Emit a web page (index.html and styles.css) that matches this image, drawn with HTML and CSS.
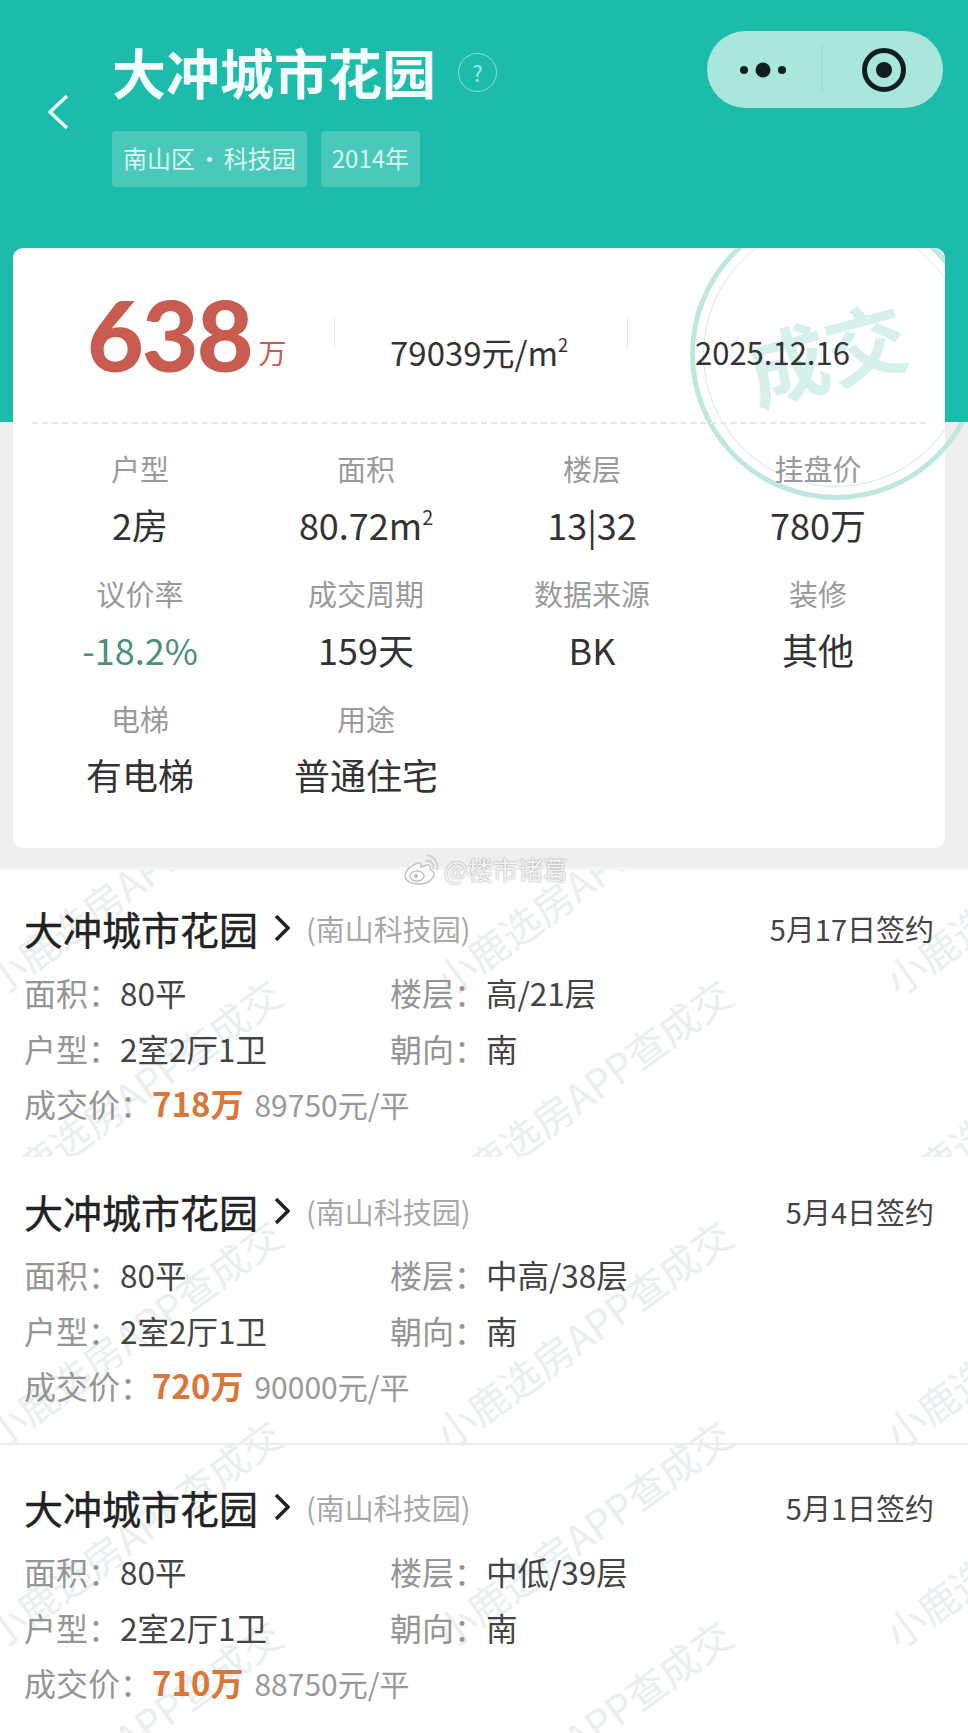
FILE: index.html
```html
<!DOCTYPE html>
<html lang="zh-CN">
<head>
<meta charset="utf-8">
<title>大冲城市花园</title>
<link rel="stylesheet" href="styles.css">
</head>
<body>
<div class="page">
  <section class="top">
    <header class="hero">
      <svg class="back" width="24" height="36" viewBox="0 0 24 36"><path d="M21 2 L4 18 L21 34"/></svg>
      <div class="hero-main">
        <div class="hero-title">
          <h1>大冲城市花园</h1>
          <span class="help">?</span>
        </div>
        <div class="tags">
          <span class="tag tag-area">南山区 · 科技园</span>
          <span class="tag">2014年</span>
        </div>
      </div>
      <svg class="capsule" width="236" height="77" viewBox="0 0 236 77">
        <rect width="236" height="77" rx="38.5" fill="#a9e6db"/>
        <line x1="115" y1="14" x2="115" y2="62" stroke="#98d8cd" stroke-width="1"/>
        <circle cx="37" cy="39" r="4" fill="#101e1e"/>
        <circle cx="56" cy="39" r="7.5" fill="#101e1e"/>
        <circle cx="75" cy="39" r="4" fill="#101e1e"/>
        <circle cx="177" cy="39" r="19.5" fill="none" stroke="#101e1e" stroke-width="5"/>
        <circle cx="177" cy="39" r="8" fill="#101e1e"/>
      </svg>
    </header>

    <div class="card">
      <div class="stamp">
        <div class="stamp-inner"></div>
        <span class="stamp-text">成交</span>
      </div>
      <div class="summary">
        <div class="price"><span class="price-num">638</span><span class="price-unit">万</span></div>
        <i class="vline"></i>
        <div class="rate">79039元/m<sup>2</sup></div>
        <i class="vline"></i>
        <div class="date">2025.12.16</div>
      </div>
      <div class="stats">
        <div class="stat"><div class="stat-label">户型</div><div class="stat-value">2房</div></div>
        <div class="stat"><div class="stat-label">面积</div><div class="stat-value">80.72m<sup>2</sup></div></div>
        <div class="stat"><div class="stat-label">楼层</div><div class="stat-value">13|32</div></div>
        <div class="stat"><div class="stat-label">挂盘价</div><div class="stat-value">780万</div></div>
        <div class="stat"><div class="stat-label">议价率</div><div class="stat-value is-down">-18.2%</div></div>
        <div class="stat"><div class="stat-label">成交周期</div><div class="stat-value">159天</div></div>
        <div class="stat"><div class="stat-label">数据来源</div><div class="stat-value">BK</div></div>
        <div class="stat"><div class="stat-label">装修</div><div class="stat-value">其他</div></div>
        <div class="stat"><div class="stat-label">电梯</div><div class="stat-value">有电梯</div></div>
        <div class="stat"><div class="stat-label">用途</div><div class="stat-value">普通住宅</div></div>
      </div>
    </div>
  </section>

  <section class="band band-one">
    <div class="wm wm-one">
      <div class="wm-cell"><span>小鹿选房APP查成交</span></div><div class="wm-cell"><span>小鹿选房APP查成交</span></div><div class="wm-cell"><span>小鹿选房APP查成交</span></div>
      <div class="wm-cell"><span>小鹿选房APP查成交</span></div><div class="wm-cell"><span>小鹿选房APP查成交</span></div><div class="wm-cell"><span>小鹿选房APP查成交</span></div>
    </div>
    <article class="item item-first">
      <div class="item-head">
        <span class="item-name">大冲城市花园</span>
        <svg class="chev" width="16" height="28" viewBox="0 0 16 28"><path d="M2 2 L14 14 L2 26"/></svg>
        <span class="item-area">(南山科技园)</span>
        <span class="item-date">5月17日签约</span>
      </div>
      <div class="row"><div class="cell"><span class="k">面积：</span><span class="v">80平</span></div><div class="cell"><span class="k">楼层：</span><span class="v">高/21层</span></div></div>
      <div class="row"><div class="cell"><span class="k">户型：</span><span class="v">2室2厅1卫</span></div><div class="cell"><span class="k">朝向：</span><span class="v">南</span></div></div>
      <div class="row row-price"><div class="cell"><span class="k">成交价：</span><span class="deal">718万</span><span class="unit">89750元/平</span></div></div>
    </article>
  </section>

  <section class="band band-two">
    <div class="wm wm-two">
      <div class="wm-cell"><span>小鹿选房APP查成交</span></div><div class="wm-cell"><span>小鹿选房APP查成交</span></div><div class="wm-cell"><span>小鹿选房APP查成交</span></div>
      <div class="wm-cell"><span>小鹿选房APP查成交</span></div><div class="wm-cell"><span>小鹿选房APP查成交</span></div><div class="wm-cell"><span>小鹿选房APP查成交</span></div>
      <div class="wm-cell"><span>小鹿选房APP查成交</span></div><div class="wm-cell"><span>小鹿选房APP查成交</span></div><div class="wm-cell"><span>小鹿选房APP查成交</span></div>
    </div>
    <article class="item item-second">
      <div class="item-head">
        <span class="item-name">大冲城市花园</span>
        <svg class="chev" width="16" height="28" viewBox="0 0 16 28"><path d="M2 2 L14 14 L2 26"/></svg>
        <span class="item-area">(南山科技园)</span>
        <span class="item-date">5月4日签约</span>
      </div>
      <div class="row"><div class="cell"><span class="k">面积：</span><span class="v">80平</span></div><div class="cell"><span class="k">楼层：</span><span class="v">中高/38层</span></div></div>
      <div class="row"><div class="cell"><span class="k">户型：</span><span class="v">2室2厅1卫</span></div><div class="cell"><span class="k">朝向：</span><span class="v">南</span></div></div>
      <div class="row row-price"><div class="cell"><span class="k">成交价：</span><span class="deal">720万</span><span class="unit">90000元/平</span></div></div>
    </article>
    <article class="item item-third">
      <div class="item-head">
        <span class="item-name">大冲城市花园</span>
        <svg class="chev" width="16" height="28" viewBox="0 0 16 28"><path d="M2 2 L14 14 L2 26"/></svg>
        <span class="item-area">(南山科技园)</span>
        <span class="item-date">5月1日签约</span>
      </div>
      <div class="row"><div class="cell"><span class="k">面积：</span><span class="v">80平</span></div><div class="cell"><span class="k">楼层：</span><span class="v">中低/39层</span></div></div>
      <div class="row"><div class="cell"><span class="k">户型：</span><span class="v">2室2厅1卫</span></div><div class="cell"><span class="k">朝向：</span><span class="v">南</span></div></div>
      <div class="row row-price"><div class="cell"><span class="k">成交价：</span><span class="deal">710万</span><span class="unit">88750元/平</span></div></div>
    </article>
  </section>

  <div class="weibo">
    <svg width="36" height="34" viewBox="0 0 36 34">
      <path class="wb-body" d="M15 11 C8 13 2 19 2 24 C2 29 9 32 16 32 C25 32 31 27 31 22 C31 19 28 18 27 17 C28 15 27 13 25 13 C23 13 20 15 18 15 C18 13 18 10 15 11Z"/>
      <ellipse class="wb-body" cx="14" cy="24" rx="7" ry="5"/>
      <circle class="wb-eye" cx="13" cy="24" r="2"/>
      <path class="wb-arc" d="M23 9 a6 6 0 0 1 7 8"/>
      <path class="wb-arc" d="M24 3 a12 12 0 0 1 10 15"/>
    </svg>
    <span>@楼市诸葛</span>
  </div>
</div>
</body>
</html>
```

FILE: styles.css
```css
* { box-sizing: border-box; }
html, body { margin: 0; padding: 0; background: #fff; }
body { font-family: "Noto Sans CJK SC", "Noto Sans", sans-serif; }
.page { position: relative; width: 968px; height: 1733px; overflow: hidden; }

/* top area */
.top {
  height: 870px;
  background: linear-gradient(#1dbcaa 422px, #efefef 422px);
  border-bottom: 3px solid #f6f6f6;
}
.hero { display: flex; align-items: flex-start; height: 248px; padding: 31px 25px 0 46px; }
.back { margin-top: 63px; flex: none; }
.back path { fill: none; stroke: #e8fbf8; stroke-width: 3.5; }
.hero-main { margin-left: 42px; margin-top: 11px; }
.hero-title { display: flex; align-items: center; height: 60px; }
.hero-title h1 { margin: 0; font-size: 54px; line-height: 60px; font-weight: 700; color: #f2fffc; }
.help {
  width: 39px; height: 39px; margin-left: 22px; border: 1.5px solid #8fe0d6; border-radius: 50%;
  display: flex; align-items: center; justify-content: center;
  font-size: 22px; color: #a5e8df;
}
.tags { display: flex; gap: 14px; margin-top: 29px; }
.tag {
  height: 56px; padding: 0 11px; border-radius: 4px;
  background: #4ac9ba; color: #d9f6f1; font-size: 24px; line-height: 53px; white-space: nowrap;
}
.tag-area { word-spacing: -3px; }
.capsule { margin-left: auto; flex: none; }

/* card */
.card { position: relative; width: 932px; height: 600px; margin-left: 13px; background: #fff; border-radius: 10px; }
.stamp {
  position: absolute; left: 677px; top: -40px; width: 292px; height: 292px;
  border: 5px solid #bde7df; border-radius: 50%;
  clip-path: polygon(0 40px, 255px 40px, 255px 214px, 292px 214px, 292px 292px, 0 292px);
}
.stamp-inner { position: absolute; inset: 8px; border: 1.5px solid #d3ebe7; border-radius: 50%; }
.stamp-text {
  position: absolute; left: 50px; top: 94px; font-size: 81px; line-height: 88px; font-weight: 700;
  color: #d6f0ec; transform: rotate(-15deg); white-space: nowrap;
}
.summary {
  position: relative; display: flex; align-items: flex-start; height: 176px; margin: 0 19px;
  border-bottom: 2px dashed #e6e6e6;
}
.price { width: 302px; padding: 26px 0 0 55px; white-space: nowrap; }
.price-num { font-family: Lato, "Noto Sans", sans-serif; font-weight: 900; font-size: 98px; line-height: 120px; color: #c85c50; letter-spacing: -2px; }
.price-unit { font-size: 28px; color: #c85c50; margin-left: 7px; vertical-align: 8px; }
.vline { flex: none; width: 1px; height: 30px; margin-top: 70px; background: #e8e8e8; }
.rate { width: 292px; padding: 75px 0 0 55px; font-size: 33px; line-height: 58px; color: #333; white-space: nowrap; }
.date { padding: 75px 0 0 67px; font-size: 31px; line-height: 58px; color: #333; white-space: nowrap; }
sup { font-size: 0.55em; line-height: 0; vertical-align: 0.75em; }

.stats {
  position: relative; display: grid; grid-template-columns: repeat(4, 226px); row-gap: 21px;
  padding: 24px 14px 0;
}
.stat { text-align: center; }
.stat-label { font-size: 29px; line-height: 40px; color: #9a9a9a; }
.stat-value { margin-top: 8px; font-size: 36px; line-height: 56px; color: #333; }
.is-down { color: #4d8f7a; }

/* list */
.band { position: relative; overflow: hidden; background: #fff; }
.band-one { height: 287px; }
.band-two { height: 576px; }
.wm {
  position: absolute; left: -93px; display: grid;
  grid-template-columns: repeat(3, 450px); grid-auto-rows: 200px;
}
.wm-one { top: -96px; grid-auto-rows: 212px; }
.wm-two { top: 76px; }
.wm-cell { display: flex; align-items: center; justify-content: center; }
.wm-cell span { font-size: 40px; color: #e9eff0; transform: rotate(-36deg); white-space: nowrap; }

.item { position: relative; padding: 0 34px 0 24px; }
.item-first { padding-top: 33px; }
.item-second { padding-top: 29px; padding-bottom: 30px; border-bottom: 2px solid #ececec; }
.item-third { padding-top: 37px; }
.item-head { display: flex; align-items: center; height: 50px; margin-bottom: 11px; }
.item-second .item-head { margin-bottom: 10px; }
.item-name { font-size: 39px; line-height: 50px; color: #222; -webkit-text-stroke: 0.4px #222; }
.chev { margin-left: 16px; flex: none; }
.chev path { fill: none; stroke: #222; stroke-width: 3.5; }
.item-area { margin-left: 16px; font-size: 29px; color: #a8a8a8; }
.item-date { margin-left: auto; font-size: 29px; color: #444; }
.row { display: flex; height: 56px; align-items: center; }
.row-price { margin-top: -1px; }
.cell { display: flex; align-items: baseline; width: 366px; white-space: nowrap; }
.k { font-size: 32px; color: #959595; }
.v { font-size: 31.5px; color: #444; }
.deal { font-size: 33px; font-weight: 700; color: #d9773a; }
.unit { margin-left: 11px; font-size: 30px; color: #999; }

/* repost mark */
.weibo { position: absolute; left: 403px; top: 851px; display: flex; align-items: center; gap: 5px; }
.weibo span { font-size: 25px; line-height: 36px; color: #f4f4f4; text-shadow: 0 0 2px rgba(0,0,0,.45); }
.wb-body { fill: #fbfbfb; stroke: #c4c4c4; stroke-width: 1.5; }
.wb-eye { fill: #bbb; }
.wb-arc { fill: none; stroke: #d0d0d0; stroke-width: 2; }
```
